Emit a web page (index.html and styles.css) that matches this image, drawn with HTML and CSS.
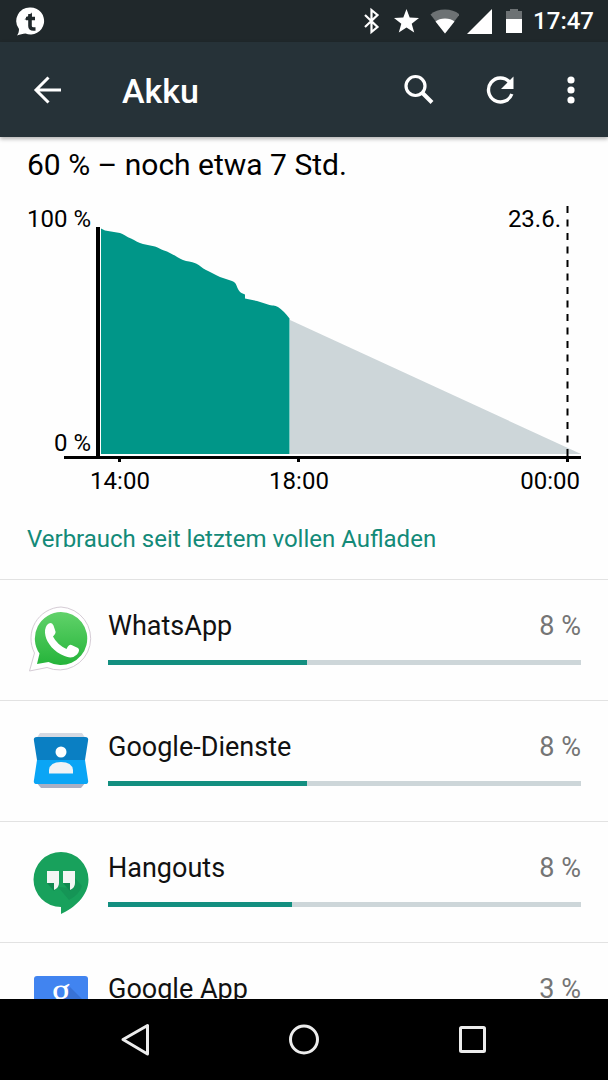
FILE: index.html
```html
<!DOCTYPE html>
<html lang="de">
<head>
  <meta charset="UTF-8">
  <meta name="viewport" content="width=device-width, initial-scale=1.0">
  <title>Akku</title>
  <link rel="stylesheet" href="styles.css">
</head>
<body>
  <!-- Status bar -->
  <div class="status-bar">
    <svg class="notification" width="30" height="30" viewBox="0 0 30 30">
      <path fill="#fff" d="M14.500 1.500a13.500 13.500 0 1 1-5 26C7 27.500 4 28.500 1 29.500c1.500-2 2-4 2-6.500A13.500 13.500 0 0 1 14.500 1.500z"/>
      <path fill="none" stroke="#20282b" stroke-width="3.600" d="M14 8v12q0 3 3.500 3h2M10 12.500h9"/>
      <path fill="#20282b" d="M8.500 13.500l7.300-7v7z"/>
    </svg>
    <div class="status-icons">
      <svg width="26" height="28" viewBox="0 0 26 28">
        <path fill="none" stroke="#fff" stroke-width="2.200" d="M6 8l12.500 12-6 5V3l6 5L6 20"/>
      </svg>
      <svg width="28" height="28" viewBox="0 0 28 28">
        <path fill="#fff" d="M13.500 2l3.200 8.600 9.300.5-7.300 5.700 2.500 8.800-7.700-5-7.700 5 2.500-8.800L1 11.100l9.300-.5z"/>
      </svg>
      <svg width="30" height="28" viewBox="0 0 30 28">
        <path fill="#6d7274" d="M16 26.500L1.500 7.500Q7 2.500 16 2.500t14.500 5z"/>
        <path fill="#fff" d="M16 26.500l-9.500-12Q10 11.500 16 11.500t9.500 3z"/>
      </svg>
      <svg width="26" height="28" viewBox="0 0 26 28">
        <path fill="#fff" d="M0 27L25 2v25z"/>
      </svg>
      <svg width="24" height="28" viewBox="0 0 24 28">
        <path fill="#6d7274" d="M5 4h4V2h8v2h4v9H5z"/>
        <path fill="#fff" d="M5 12h16v14H5z"/>
      </svg>
    </div>
    <span class="clock">17:47</span>
  </div>

  <!-- App bar -->
  <header class="app-bar">
    <button class="icon-button" aria-label="Zurück">
      <svg width="30" height="30" viewBox="0 0 30 30">
        <path fill="none" stroke="#fff" stroke-width="3" d="M29 15H4M16.500 2.500L4 15l12.500 12.500"/>
      </svg>
    </button>
    <h1>Akku</h1>
    <button class="icon-button" aria-label="Suchen">
      <svg width="32" height="32" viewBox="0 0 32 32">
        <circle cx="12.500" cy="12" r="9.500" fill="none" stroke="#fff" stroke-width="3.200"/>
        <path fill="none" stroke="#fff" stroke-width="4" d="M19.500 19l9.500 9.500"/>
      </svg>
    </button>
    <button class="icon-button" aria-label="Aktualisieren">
      <svg width="30" height="30" viewBox="0 0 30 30">
        <path fill="none" stroke="#fff" stroke-width="3.400" d="M26.800 19A12 12 0 1 1 24.500 7"/>
        <path fill="#fff" d="M28.500 1.500v12.500h-12.500z"/>
      </svg>
    </button>
    <button class="icon-button menu-button" aria-label="Weitere Optionen">
      <svg width="10" height="30" viewBox="0 0 10 30">
        <g fill="#fff">
          <circle cx="5" cy="5" r="3.600"/>
          <circle cx="5" cy="15" r="3.600"/>
          <circle cx="5" cy="25" r="3.600"/>
        </g>
      </svg>
    </button>
  </header>

  <main>
    <p class="summary">60 % – noch etwa 7 Std.</p>

    <!-- Battery level over time -->
    <svg class="chart" viewBox="0 0 608 316" role="img" aria-label="Akkustand">
      <path fill="#009688" d="M101 38.500l4 2 15 2.500c3 1 7 4 11 5.500 4 2 8 4.500 12 5.500l12 2.500c4 1 5 3 9 4 7 2 13 7 19 9.500 4 1.500 8 1.500 13 3.500 4 1.500 6 5 10 6.500 5 2 9 5 14 7l12 4q3.500 1 4.500 4.500 2 6 5 7.500l3.500 1.500v4l12 2.500 11 3.500c4 1.500 7 .5 10 2.500q6 4 11.500 11.500V264H101z"/>
      <path fill="#cdd6d9" d="M290 130v134h291z"/>
      <g fill="#000">
        <rect x="96" y="37" width="4" height="230"/>
        <rect x="64" y="266" width="517" height="3"/>
        <rect x="118" y="268" width="3" height="4"/>
        <rect x="297" y="268" width="3" height="4"/>
        <rect x="566" y="268" width="3" height="4"/>
      </g>
      <path stroke="#000" stroke-width="2" stroke-dasharray="7 6.500" d="M567.500 16v250"/>
      <text x="91" y="37" text-anchor="end">100 %</text>
      <text x="91" y="261" text-anchor="end">0 %</text>
      <text x="561" y="37" text-anchor="end">23.6.</text>
      <text x="120" y="299" text-anchor="middle">14:00</text>
      <text x="299" y="299" text-anchor="middle">18:00</text>
      <text x="580" y="299" text-anchor="end">00:00</text>
    </svg>

    <h2>Verbrauch seit letztem vollen Aufladen</h2>

    <!-- Usage per app -->
    <ul class="usage-list">
      <li>
        <svg class="app-icon" width="68" height="68" viewBox="0 0 68 68">
          <defs>
            <linearGradient id="chat-green" x1="0" y1="0" x2="0" y2="1">
              <stop offset="0" stop-color="#61d26a"/>
              <stop offset="1" stop-color="#25b43a"/>
            </linearGradient>
          </defs>
          <path fill="#fff" stroke="#d5ccd5" d="M34 1a31.500 31.500 0 1 1-14 60.500L2.500 65l5-18A31.500 31.500 0 0 1 34 1z"/>
          <path fill="url(#chat-green)" d="M34 6a26.500 26.500 0 1 1-12.500 50L10 58l2.500-10.500A26.500 26.500 0 0 1 34 6z"/>
          <path fill="#fff" d="M20 19q4-4 6.500.5l2 6q.5 2-2.500 5 4 8 13.500 12.500 2.500-5 5-4l6.500 3q2.500 2-1 6.500-5 5-12.500 1.500C27 46 20 37 18.500 30q-1.500-7 1.500-11z"/>
        </svg>
        <div class="usage">
          <div class="usage-text">
            <span class="app-name" id="app-1">WhatsApp</span>
            <span class="percent">8 %</span>
          </div>
          <progress max="100" value="42" aria-labelledby="app-1"></progress>
        </div>
      </li>
      <li>
        <svg class="app-icon" width="68" height="68" viewBox="0 0 68 68">
          <path fill="#d5d9e2" d="M13 6h42l4 6H9z"/>
          <path fill="#a9afc4" d="M9 55h50l-5 6H14z"/>
          <path fill="#0a7fc3" d="M10 10h48q4 0 3 4l-3 19H10L7 14q-1-4 3-4z"/>
          <path fill="#0aa5f5" d="M10 33h48l3 20q1 4-3 4H10q-4 0-3-4z"/>
          <circle cx="34" cy="25" r="5.500" fill="#fff"/>
          <path fill="#f1f3f5" d="M22 46.500V43q1-8 12-8t12 8v3.500z"/>
        </svg>
        <div class="usage">
          <div class="usage-text">
            <span class="app-name" id="app-2">Google-Dienste</span>
            <span class="percent">8 %</span>
          </div>
          <progress max="100" value="42" aria-labelledby="app-2"></progress>
        </div>
      </li>
      <li>
        <svg class="app-icon" width="68" height="68" viewBox="0 0 68 68">
          <path fill="#18a15c" d="M34 4a27.500 27.500 0 0 1 27.500 27.500C61.500 48 47 60 34 66v-7A27.500 27.500 0 0 1 34 4z"/>
          <path fill="#159556" d="M31 39l11 13q10-5 13-14l-7-8-4 10z"/>
          <path fill="#118850" d="M20 35h8l4 2-5 6zM36 35h8l4 2-5 6z"/>
          <path fill="#f3f6f4" d="M20 23h12v12q0 5-5 7v-7h-7zM36 23h12v12q0 5-5 7v-7h-7z"/>
        </svg>
        <div class="usage">
          <div class="usage-text">
            <span class="app-name" id="app-3">Hangouts</span>
            <span class="percent">8 %</span>
          </div>
          <progress max="100" value="39" aria-labelledby="app-3"></progress>
        </div>
      </li>
      <li>
        <svg class="app-icon" width="68" height="68" viewBox="0 0 68 68">
          <rect x="7" y="7" width="54" height="54" rx="3" fill="#4184f0"/>
          <path fill="#3872d6" d="M43 18l18 18v25H34V36z"/>
          <text class="g-letter" x="34" y="36" text-anchor="middle">g</text>
        </svg>
        <div class="usage">
          <div class="usage-text">
            <span class="app-name" id="app-4">Google App</span>
            <span class="percent">3 %</span>
          </div>
          <progress max="100" value="16" aria-labelledby="app-4"></progress>
        </div>
      </li>
    </ul>
  </main>

  <!-- System navigation -->
  <nav class="nav-bar">
    <button aria-label="Zurück">
      <svg width="32" height="34" viewBox="0 0 32 34">
        <path fill="none" stroke="#ececec" stroke-width="3" stroke-linejoin="round" d="M27.500 2.500v28.500L3 16.500z"/>
      </svg>
    </button>
    <button aria-label="Startbildschirm">
      <svg width="32" height="32" viewBox="0 0 32 32">
        <circle cx="16" cy="15.500" r="13.500" fill="none" stroke="#ececec" stroke-width="3"/>
      </svg>
    </button>
    <button aria-label="Letzte Apps">
      <svg width="32" height="32" viewBox="0 0 32 32">
        <rect x="4.500" y="3.500" width="24" height="24" rx="1" fill="none" stroke="#ececec" stroke-width="3"/>
      </svg>
    </button>
  </nav>
</body>
</html>
```

FILE: styles.css
```css
* {
  box-sizing: border-box;
}
body {
  display: flex;
  flex-direction: column;
  height: 100vh;
  margin: 0;
  font-family: Roboto, sans-serif;
  background-color: #fefefe;
  color: #111;
}
svg {
  display: block;
}
button {
  display: flex;
  align-items: center;
  justify-content: center;
  padding: 0;
  border: none;
  background: none;
  cursor: pointer;
}

/* Status bar */
.status-bar {
  display: flex;
  flex-shrink: 0;
  align-items: center;
  height: 42px;
  padding: 0 14px 0 16px;
  background-color: #20282b;
  color: #fff;
}
.status-icons {
  display: flex;
  gap: 8px;
  margin-left: auto;
}
.clock {
  margin-left: 8px;
  font-size: 24px;
  font-weight: 500;
  line-height: 28px;
}

/* App bar */
.app-bar {
  display: flex;
  flex-shrink: 0;
  align-items: center;
  height: 95px;
  padding: 0 22px;
  background-color: #263238;
  box-shadow: 0 2px 4px rgba(0, 0, 0, 0.3);
  color: #fff;
  z-index: 1;
}
.app-bar h1 {
  flex: 1;
  margin: 2px 0 0 50px;
  font-size: 34px;
  font-weight: 500;
  line-height: 40px;
}
.icon-button {
  width: 50px;
  height: 50px;
}
.icon-button + .icon-button {
  margin-left: 31px;
}
.icon-button + .menu-button {
  width: 30px;
}

/* Content */
main {
  flex: 1;
  min-height: 0;
  overflow: hidden;
}
.summary {
  margin: 10px 27px 0;
  font-size: 30px;
  line-height: 36px;
  color: #000;
}
.chart {
  width: 100%;
  margin-top: 7px;
}
.chart text {
  font-size: 24px;
}
h2 {
  margin: 19px 27px 26px;
  font-size: 24px;
  font-weight: 400;
  line-height: 28px;
  color: #138a78;
}
.usage-list {
  margin: 0;
  padding: 0;
  list-style: none;
}
.usage-list li {
  display: flex;
  align-items: center;
  gap: 13px;
  height: 121px;
  padding: 0 27px;
  border-top: 1px solid #e2e2e2;
}
.app-icon {
  flex-shrink: 0;
}
.usage {
  flex: 1;
}
.usage-text {
  display: flex;
  justify-content: space-between;
  margin: 0 0 18px;
  font-size: 27px;
  line-height: 32px;
}
.percent {
  color: #757575;
}
progress {
  display: block;
  width: 100%;
  height: 5px;
  margin-bottom: 6px;
  border: none;
  background-color: #cdd6d9;
  appearance: none;
}
progress::-webkit-progress-bar {
  background-color: #cdd6d9;
}
progress::-webkit-progress-value {
  background-color: #138f80;
}
.g-letter {
  font-family: "Liberation Serif", serif;
  font-size: 40px;
  fill: #fff;
}

/* Navigation bar */
.nav-bar {
  display: flex;
  flex-shrink: 0;
  height: 81px;
  padding: 0 52px;
  background-color: #000;
}
.nav-bar button {
  flex: 1;
}
```
